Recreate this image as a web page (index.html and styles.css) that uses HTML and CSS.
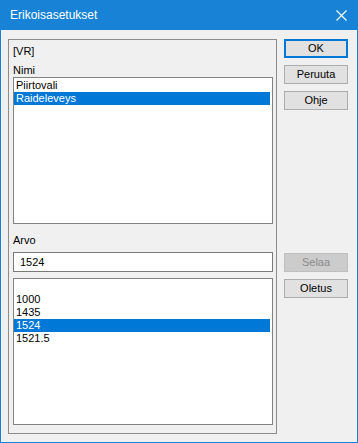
FILE: index.html
```html
<!DOCTYPE html>
<html>
<head>
<meta charset="utf-8">
<link rel="stylesheet" href="styles.css">
</head>
<body>
<div class="window">
  <div class="titlebar">
    <span class="title">Erikoisasetukset</span>
    <svg class="close" width="11" height="11" viewBox="0 0 11 11"><path d="M0.5 0.5 L10.5 10.5 M10.5 0.5 L0.5 10.5" stroke="#fff" stroke-width="1.1" fill="none"/></svg>
  </div>
  <div class="client">
    <div class="group">
      <div class="label">[VR]</div>
      <div class="label gap-s">Nimi</div>
      <div class="listbox">
        <div class="row">Piirtovali</div>
        <div class="row sel">Raideleveys</div>
      </div>
      <div class="label gap-l">Arvo</div>
      <div class="input">1524</div>
      <div class="listbox gap-i">
        <div class="row"></div>
        <div class="row">1000</div>
        <div class="row">1435</div>
        <div class="row sel">1524</div>
        <div class="row">1521.5</div>
      </div>
    </div>
    <div class="buttons">
      <div class="btn default">OK</div>
      <div class="btn">Peruuta</div>
      <div class="btn">Ohje</div>
      <div class="btn disabled push">Selaa</div>
      <div class="btn">Oletus</div>
    </div>
  </div>
</div>
</body>
</html>
```
FILE: styles.css
```css
* { box-sizing: border-box; }
html, body { margin: 0; padding: 0; background: #f0f0f0; }
body { font-family: "Liberation Sans", Arial, sans-serif; font-size: 11px; color: #000; }
.window {
  width: 358px; height: 443px;
  border: 1px solid #1883d6;
  background: #f0f0f0;
  display: flex; flex-direction: column;
}
.titlebar {
  height: 29px; flex: none;
  background: #1883d6;
  display: flex; align-items: center; justify-content: space-between;
  padding: 0 10px 1px 9px;
}
.title { color: #fff; font-size: 12px; line-height: 14px; }
.close { display: block; margin-top: 1px; }
.client {
  flex: 1;
  display: flex; gap: 7px;
  padding: 9px 9px 0 7px;
}
.group {
  width: 269px; height: 395px;
  border: 1px solid #8c8c8c;
  padding: 5px 2px 8px 4px;
  display: flex; flex-direction: column;
}
.label { height: 13px; line-height: 13px; }
.gap-s { margin-top: 6px; }
.gap-l { margin-top: 10px; }
.listbox {
  width: 260px; height: 147px;
  border: 1px solid #828282;
  background: #fff;
  padding: 1px 2px 0 0;
}
.row { height: 13px; line-height: 13px; padding-left: 2px; white-space: nowrap; }
.row.sel { background: #0078d7; color: #fff; }
.input {
  width: 260px; height: 20px; margin-top: 5px;
  border: 1px solid #7a7a7a;
  background: #fff;
  line-height: 18px; padding-left: 6px;
}
.gap-i { margin-top: 6px; }
.buttons { width: 64px; display: flex; flex-direction: column; gap: 7px; }
.btn {
  height: 19px;
  border: 1px solid #adadad;
  background: #e1e1e1;
  text-align: center; line-height: 17px;
}
.btn.default { border-color: #0078d7; box-shadow: inset 0 0 0 1px #0078d7; }
.btn.disabled { background: #cccccc; border-color: #bfbfbf; color: #8a8a8a; }
.btn.push { margin-top: 136px; }
```
